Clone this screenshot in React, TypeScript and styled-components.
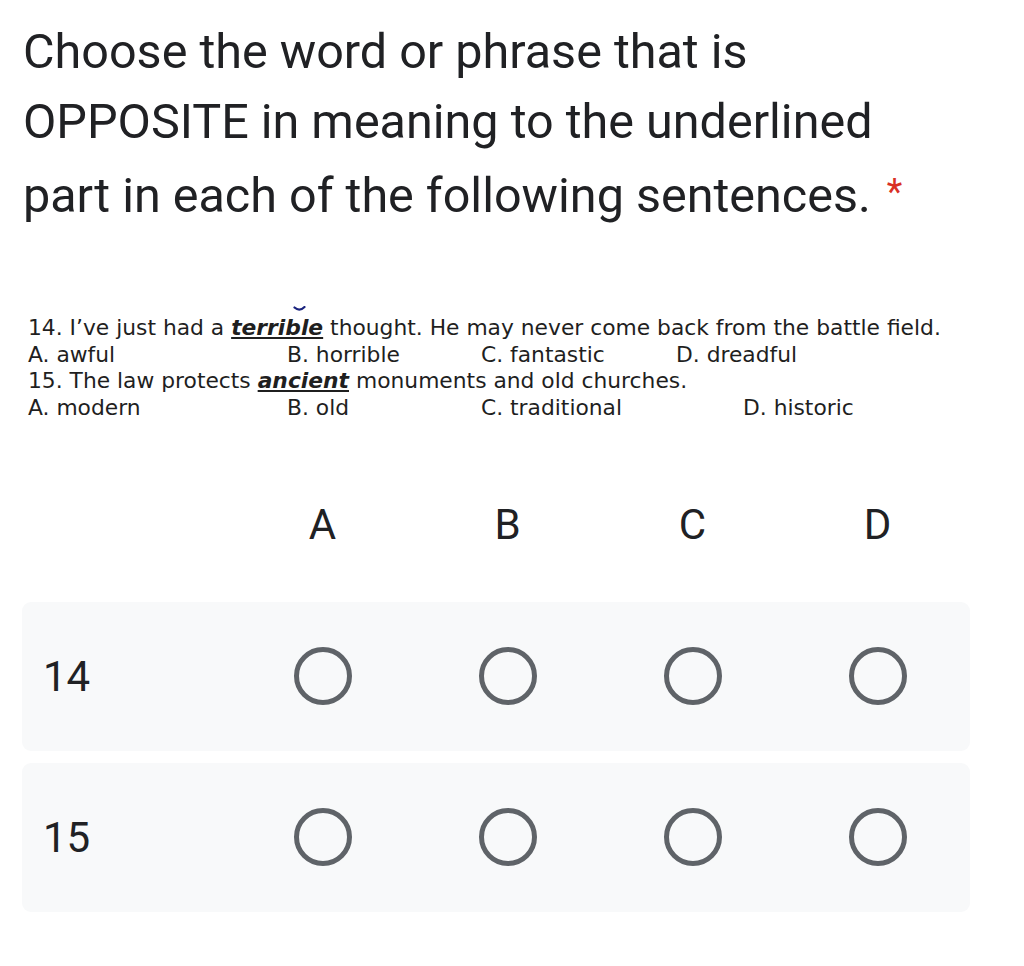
import React from 'react';
import styled, { createGlobalStyle } from 'styled-components';

const GlobalStyle = createGlobalStyle`
  html, body {
    margin: 0;
    padding: 0;
    background: #ffffff;
  }
  * {
    box-sizing: border-box;
  }
`;

const Page = styled.div`
  width: 1024px;
  min-height: 966px;
  padding-top: 17px;
  background: #ffffff;
`;

const Title = styled.div`
  padding: 0 23px;
  font-family: Roboto, 'Open Sans', sans-serif;
  font-size: 48.5px;
  line-height: 70px;
  color: #202124;
  white-space: nowrap;
`;

const Required = styled.span`
  color: #d93025;
  margin-left: 16px;
  font-size: 36px;
  vertical-align: 8px;
`;

const QuestionText = styled.div`
  margin-top: 84px;
  padding-left: 28px;
  font-family: 'DejaVu Sans', Verdana, sans-serif;
  font-size: 21.8px;
  line-height: 26.7px;
  color: #1f1f1f;
`;

const Sentence = styled.div`
  white-space: nowrap;
`;

const Keyword = styled.span`
  position: relative;
  font-weight: bold;
  font-style: italic;
  text-decoration: underline;
  text-underline-offset: 2px;
`;

const Mark = styled.svg`
  position: absolute;
  left: 62px;
  top: -9px;
`;

const OptionLine = styled.div<{ $cols: string }>`
  display: grid;
  grid-template-columns: ${(p) => p.$cols};
  white-space: nowrap;
`;

const Grid = styled.div`
  margin: 68px 0 0 22px;
  width: 948px;
  display: flex;
  flex-direction: column;
  gap: 12px;
  font-family: Roboto, 'Open Sans', sans-serif;
  color: #202124;
`;

const HeaderRow = styled.div`
  display: grid;
  grid-template-columns: 208px repeat(4, 185px);
  height: 70px;
  align-items: center;
  font-size: 42px;
  margin-bottom: 30px;
`;

const ColumnLabel = styled.div`
  text-align: center;
  line-height: 70px;
`;

const AnswerRow = styled.div`
  display: grid;
  grid-template-columns: 208px repeat(4, 185px);
  height: 149px;
  align-items: center;
  background: #f8f9fa;
  border-radius: 9px;
`;

const RowLabel = styled.div`
  padding-left: 21px;
  font-size: 42px;
`;

const Cell = styled.div`
  display: flex;
  justify-content: center;
  align-items: center;
`;

const Radio = styled.span`
  width: 58px;
  height: 58px;
  border: 5px solid #5f6368;
  border-radius: 50%;
  display: block;
`;

const letters = ['A', 'B', 'C', 'D'];

const App: React.FC = () => {
  return (
    <Page>
      <GlobalStyle />
      <Title>
        Choose the word or phrase that is
        <br />
        OPPOSITE in meaning to the underlined
        <br />
        part in each of the following sentences.<Required>*</Required>
      </Title>

      <QuestionText>
        <Sentence>
          14. I’ve just had a{' '}
          <Keyword>
            terrible
            <Mark width="13" height="6" viewBox="0 0 13 6">
              <path d="M1.5 1.5 Q6.5 6 11.5 1" fill="none" stroke="#1a237e" strokeWidth="2.2" strokeLinecap="round" />
            </Mark>
          </Keyword>{' '}
          thought. He may never come back from the battle field.
        </Sentence>
        <OptionLine $cols="259px 194px 195px auto">
          <span>A. awful</span>
          <span>B. horrible</span>
          <span>C. fantastic</span>
          <span>D. dreadful</span>
        </OptionLine>
        <Sentence>
          15. The law protects <Keyword>ancient</Keyword> monuments and old churches.
        </Sentence>
        <OptionLine $cols="259px 194px 262px auto">
          <span>A. modern</span>
          <span>B. old</span>
          <span>C. traditional</span>
          <span>D. historic</span>
        </OptionLine>
      </QuestionText>

      <Grid>
        <HeaderRow>
          <div />
          {letters.map((l) => (
            <ColumnLabel key={l}>{l}</ColumnLabel>
          ))}
        </HeaderRow>
        {['14', '15'].map((n) => (
          <AnswerRow key={n}>
            <RowLabel>{n}</RowLabel>
            {letters.map((l) => (
              <Cell key={l}>
                <Radio />
              </Cell>
            ))}
          </AnswerRow>
        ))}
      </Grid>
    </Page>
  );
};

export default App;
